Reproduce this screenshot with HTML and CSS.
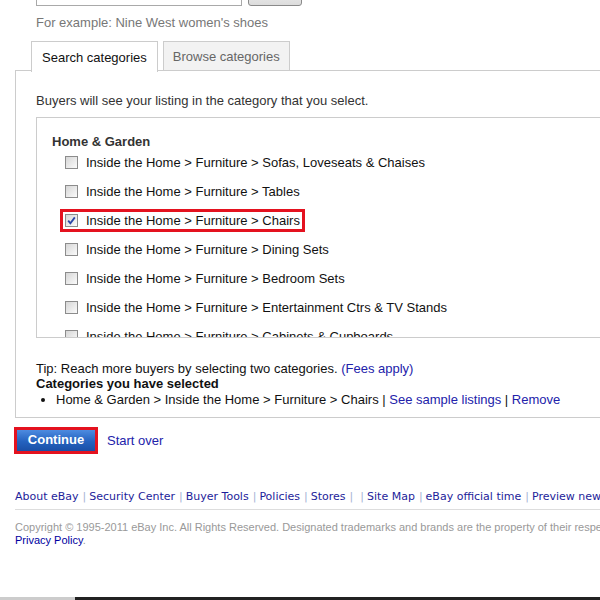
FILE: index.html
```html
<!DOCTYPE html>
<html>
<head>
<meta charset="utf-8">
<link rel="stylesheet" href="styles.css">
</head>
<body>
<div class="page">
  <div class="search-row">
    <div class="search-input">furniture</div>
    <div class="search-btn">Search</div>
  </div>
  <div class="example">For example: Nine West women's shoes</div>
  <div class="tabs">
    <div class="tab active">Search categories</div>
    <div class="tab">Browse categories</div>
  </div>
  <div class="panel">
    <p class="intro">Buyers will see your listing in the category that you select.</p>
    <div class="catbox">
      <div class="group">Home &amp; Garden</div>
      <ul class="cats">
        <li><span class="cb"></span>Inside the Home &gt; Furniture &gt; Sofas, Loveseats &amp; Chaises</li>
        <li><span class="cb"></span>Inside the Home &gt; Furniture &gt; Tables</li>
        <li class="picked"><span class="cb checked"><svg viewBox="0 0 13 13" width="13" height="13"><path d="M3.2 6.6 L5.4 9.3 L9.8 3.4" fill="none" stroke="#2a46a8" stroke-width="1.8"/></svg></span>Inside the Home &gt; Furniture &gt; Chairs</li>
        <li><span class="cb"></span>Inside the Home &gt; Furniture &gt; Dining Sets</li>
        <li><span class="cb"></span>Inside the Home &gt; Furniture &gt; Bedroom Sets</li>
        <li><span class="cb"></span>Inside the Home &gt; Furniture &gt; Entertainment Ctrs &amp; TV Stands</li>
        <li><span class="cb"></span>Inside the Home &gt; Furniture &gt; Cabinets &amp; Cupboards</li>
      </ul>
    </div>
    <div class="tip">Tip: Reach more buyers by selecting two categories. <a>(Fees apply)</a></div>
    <div class="selhead">Categories you have selected</div>
    <ul class="selected">
      <li>Home &amp; Garden &gt; Inside the Home &gt; Furniture &gt; Chairs | <a>See sample listings</a> | <a>Remove</a></li>
    </ul>
  </div>
  <div class="actions">
    <span class="btn-wrap"><span class="btn">Continue</span></span>
    <a class="startover">Start over</a>
  </div>
  <div class="footer-links">
    <a>About eBay</a><span class="sep">|</span><a>Security Center</a><span class="sep">|</span><a>Buyer Tools</a><span class="sep">|</span><a>Policies</a><span class="sep">|</span><a>Stores</a><span class="sep">|</span><span class="sep">|</span><a>Site Map</a><span class="sep">|</span><a>eBay official time</a><span class="sep">|</span><a>Preview new features</a>
  </div>
  <div class="copyright">Copyright © 1995-2011 eBay Inc. All Rights Reserved. Designated trademarks and brands are the property of their respective owners. Use of this Web site constitutes acceptance of the eBay User Agreement and</div>
  <div class="privacy"><a>Privacy Policy</a>.</div>
</div>
<div class="bottom-edge"></div>
</body>
</html>
```
FILE: styles.css
```css
html, body {
  margin: 0;
  padding: 0;
  background: #fff;
  overflow: hidden;
  height: 600px;
}
body {
  font-family: "Liberation Sans", Arial, sans-serif;
  font-size: 13px;
  color: #333;
  position: relative;
}
a { color: #2222aa; cursor: pointer; }
.page {
  padding-left: 15px;
  margin-top: -15px;
  width: 700px;
}
.search-row {
  display: flex;
  gap: 6px;
  margin-left: 21px;
  height: 21px;
}
.search-input {
  width: 196px;
  height: 19px;
  border: 1px solid #a9a9a9;
  padding: 0 4px;
  line-height: 19px;
  color: #000;
}
.search-btn {
  width: 52px;
  height: 19px;
  border: 1px solid #8a8a8a;
  border-radius: 3px;
  background: linear-gradient(#f4f4f4, #dcdcdc);
  text-align: center;
  line-height: 19px;
  color: #000;
}
.example {
  margin-left: 21px;
  margin-top: 9px;
  color: #777;
  line-height: 16px;
}
.tabs {
  display: flex;
  gap: 5px;
  margin-left: 16px;
  margin-top: 10px;
  height: 29px;
  position: relative;
  z-index: 1;
  white-space: nowrap;
}
.tab {
  font-family: "Liberation Sans", Tahoma, sans-serif;
  border: 1px solid #ccc;
  border-bottom: none;
  padding: 0 9px;
  line-height: 29px;
  height: 29px;
  box-sizing: border-box;
  background: #f2f2f2;
  color: #666;
}
.tab.active {
  background: #fff;
  color: #111;
  height: 31px;
  line-height: 31px;
  padding: 0 10px;
}
.panel {
  border-left: 1px solid #ccc;
  border-top: 1px solid #ccc;
  border-bottom: 1px solid #ccc;
  padding-left: 20px;
  padding-bottom: 9px;
}
.intro {
  margin: 22px 0 0;
  line-height: 16px;
}
.catbox {
  margin-top: 8px;
  border: 1px solid #ccc;
  height: 221px;
  overflow: hidden;
  padding: 15px 0 0 15px;
  box-sizing: border-box;
}
.group {
  font-weight: bold;
  color: #333;
  line-height: 18px;
}
.cats {
  list-style: none;
  margin: -3px 0 0;
  padding: 0 0 0 13px;
}
.cats li {
  display: flex;
  align-items: center;
  height: 29px;
  color: #111;
}
.cats li.picked {
  position: relative;
}
.cats li.picked::before {
  content: "";
  position: absolute;
  left: -5px;
  top: 3px;
  width: 239px;
  height: 17px;
  border: 3px solid #e4121f;
}
.cb {
  display: inline-block;
  width: 11px;
  height: 11px;
  border: 1px solid #8c8c8c;
  background: linear-gradient(135deg, #d6d6d6, #fbfbfb);
  margin-right: 8px;
  position: relative;
  flex: none;
}
.cb svg {
  position: absolute;
  left: -1px;
  top: -1px;
}
.tip {
  margin-top: 23px;
  color: #111;
  line-height: 15px;
}
.selhead {
  font-weight: bold;
  color: #111;
  line-height: 16px;
}
.selected {
  margin: 0;
  padding-left: 20px;
  color: #111;
  line-height: 16px;
}
.actions {
  display: flex;
  align-items: center;
  margin-top: 9px;
  gap: 9px;
  margin-left: -1px;
}
.btn-wrap {
  border: 3px solid #e4121f;
  display: inline-block;
}
.btn {
  display: block;
  width: 78px;
  height: 21px;
  line-height: 20px;
  text-align: center;
  color: #fff;
  font-weight: bold;
  background: linear-gradient(#4d8be0, #2462bf 55%, #1a4fa6);
}
.startover {
  color: #2222aa;
}
.footer-links {
  margin-top: 36px;
  font-family: "DejaVu Sans", Verdana, sans-serif;
  font-size: 11px;
  line-height: 14px;
  padding-bottom: 5px;
  border-bottom: 1px solid #ddd;
  white-space: nowrap;
}
.footer-links a { color: #1d1d9a; }
.footer-links .sep {
  color: #a6b3d6;
  margin: 0 3px 0 4px;
}
.copyright {
  margin-top: 10px;
  color: #999;
  font-size: 11px;
  line-height: 14px;
  white-space: nowrap;
}
.privacy {
  color: #999;
  font-size: 11px;
  line-height: 13px;
}
.privacy a { color: #0000a0; }
.bottom-edge {
  position: absolute;
  left: 0;
  top: 597px;
  width: 600px;
  height: 3px;
  background: linear-gradient(to right, #ccc 0, #ccc 75px, #222 75px);
}
```
